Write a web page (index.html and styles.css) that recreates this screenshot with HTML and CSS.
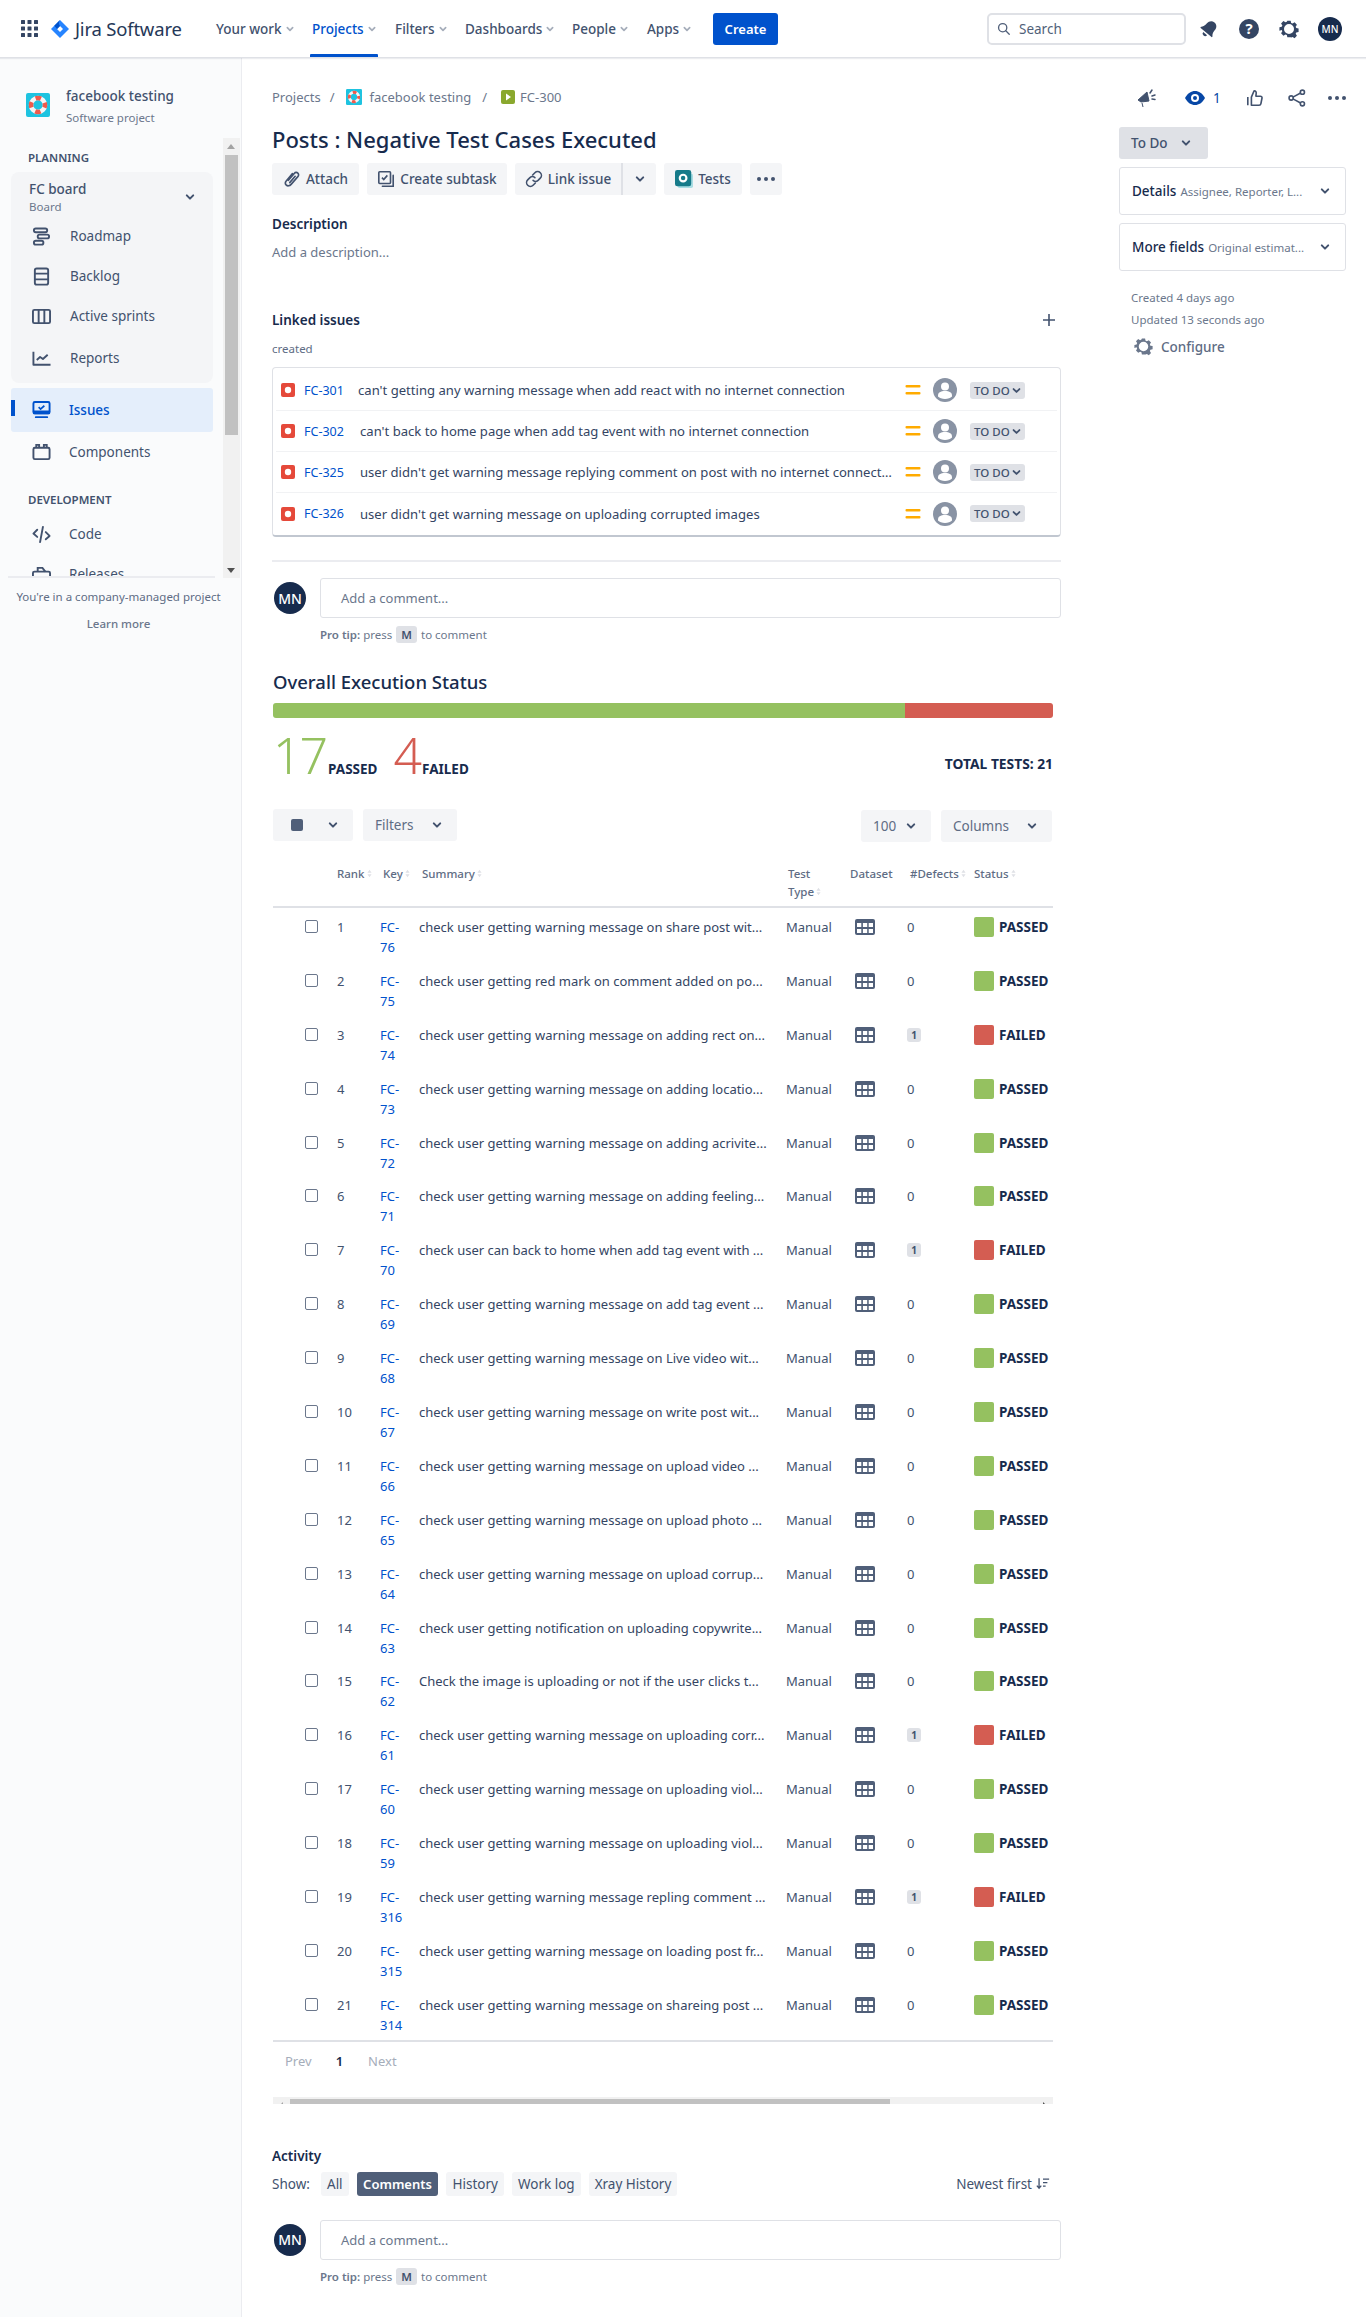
FILE: index.html
```html
<!DOCTYPE html>
<html lang="en">
<head>
  <meta charset="UTF-8" />
  <meta name="viewport" content="width=device-width, initial-scale=1.0" />
  <title>Posts : Negative Test Cases Executed</title>
  <link rel="stylesheet" href="styles.css">
</head>
<body>
  <svg class="sprites" aria-hidden="true">
    <symbol id="i-chev" viewBox="0 0 12 12"><path d="M2.8 4.4 6 7.6l3.2-3.2" fill="none" stroke="currentColor" stroke-width="2" stroke-linecap="round" stroke-linejoin="round"/></symbol>
    <symbol id="i-bug" viewBox="0 0 14 14"><rect width="14" height="14" rx="2" fill="#e5493a"/><circle cx="7" cy="7" r="3.2" fill="#fff"/></symbol>
    <symbol id="i-prio" viewBox="0 0 16 16"><rect x="0.5" y="3" width="15" height="2.600" rx="1" fill="#ffab00"/><rect x="0.5" y="10" width="15" height="2.600" rx="1" fill="#ffab00"/></symbol>
    <symbol id="i-user" viewBox="0 0 24 24"><circle cx="12" cy="12" r="12" fill="#8993a4"/><circle cx="12" cy="8.500" r="4" fill="#fff"/><path d="M5 17.500c0-3 2.500-4.500 7-4.500s7 1.500 7 4.500v1c-1.500 1.500-4 2.500-7 2.500s-5.500-1-7-2.500z" fill="#fff"/></symbol>
    <symbol id="i-table" viewBox="0 0 20 16"><rect width="20" height="16" rx="2" fill="#505f79"/><g fill="#fff"><rect x="2" y="4" width="4.300" height="4"/><rect x="7.900" y="4" width="4.300" height="4"/><rect x="13.700" y="4" width="4.300" height="4"/><rect x="2" y="10" width="4.300" height="4"/><rect x="7.900" y="10" width="4.300" height="4"/><rect x="13.700" y="10" width="4.300" height="4"/></g></symbol>
    <symbol id="i-sort" viewBox="0 0 6 10"><path d="M3 .5 5.500 4h-5zM3 9.500.5 6h5z" fill="#dfe1e6"/></symbol>
    <symbol id="i-gear" viewBox="0 0 24 24"><path fill-rule="evenodd" d="M10 2h4l.6 2.800 1.700.7 2.400-1.500 2.800 2.800-1.500 2.400.7 1.700 2.800.6v4l-2.800.6-.7 1.700 1.500 2.400-2.800 2.800-2.400-1.500-1.700.7L14 22h-4l-.6-2.800-1.700-.7-2.400 1.500-2.800-2.800 1.500-2.400-.7-1.700L.5 14v-4l2.800-.6.7-1.700L2.500 5.300l2.800-2.800 2.400 1.500 1.700-.7zM12 6a6 6 0 1 0 0 12 6 6 0 0 0 0-12z" fill="currentColor"/></symbol>
    <symbol id="i-project" viewBox="0 0 24 24"><rect width="24" height="24" rx="2" fill="#1ec3e0"/><circle cx="12" cy="12" r="7" fill="none" stroke="#f4f5f7" stroke-width="4.500"/><g fill="none" stroke="#ef5a4c" stroke-width="4.500" stroke-dasharray="5.500 5.500"><circle cx="12" cy="12" r="7" stroke-dashoffset="2.700"/></g></symbol>
  </svg>

  <header class="topbar">
    <svg class="apps-icon" viewBox="0 0 17 17"><g fill="#344563"><rect width="4" height="4" rx=".5"/><rect x="6.500" width="4" height="4" rx=".5"/><rect x="13" width="4" height="4" rx=".5"/><rect y="6.500" width="4" height="4" rx=".5"/><rect x="6.500" y="6.500" width="4" height="4" rx=".5"/><rect x="13" y="6.500" width="4" height="4" rx=".5"/><rect y="13" width="4" height="4" rx=".5"/><rect x="6.500" y="13" width="4" height="4" rx=".5"/><rect x="13" y="13" width="4" height="4" rx=".5"/></g></svg>
    <svg class="jira-mark" viewBox="0 0 18 18"><path d="M9 0 18 9l-9 9-9-9z" fill="#2684ff"/><path d="M9 6 12 9 9 12 6 9z" fill="#fff"/><path d="M9 0 3.300 5.700 6 9l3-3c-1.500-2-1.500-4 0-6z" fill="#0052cc"/></svg>
    <span class="jira-name">Jira Software</span>
    <nav class="topnav">
      <a class="nav-item w1">Your work <svg class="chev"><use href="#i-chev"/></svg></a>
      <a class="nav-item w2 active">Projects <svg class="chev"><use href="#i-chev"/></svg></a>
      <a class="nav-item w3">Filters <svg class="chev"><use href="#i-chev"/></svg></a>
      <a class="nav-item w4">Dashboards <svg class="chev"><use href="#i-chev"/></svg></a>
      <a class="nav-item w5">People <svg class="chev"><use href="#i-chev"/></svg></a>
      <a class="nav-item w6">Apps <svg class="chev"><use href="#i-chev"/></svg></a>
    </nav>
    <button class="create-btn">Create</button>
    <div class="search">
      <svg viewBox="0 0 16 16"><circle cx="6.500" cy="6.500" r="4.700" fill="none" stroke="#505f79" stroke-width="1.500"/><path d="m10 10 4 4" stroke="#505f79" stroke-width="1.500" stroke-linecap="round"/></svg>
      <span>Search</span>
    </div>
    <div class="top-icons">
      <svg viewBox="0 0 20 20"><g transform="rotate(40 10 10)" fill="#344563"><path d="M10 1.500c3.300 0 5.200 2.500 5.200 5.500 0 4 1 5 2.300 6.500v1h-15v-1C3.800 12 4.800 11 4.800 7c0-3 1.900-5.500 5.200-5.500z"/><path d="M7.500 16h5a2.500 2.500 0 0 1-5 0z"/></g></svg>
      <svg viewBox="0 0 20 20"><circle cx="10" cy="10" r="10" fill="#344563"/><text x="10" y="15" text-anchor="middle" class="help-q">?</text></svg>
      <svg class="gear-top"><use href="#i-gear"/></svg>
      <span class="avatar small">MN</span>
    </div>
  </header>

  <div class="layout">
    <aside class="sidebar">
      <div class="project">
        <svg class="project-icon"><use href="#i-project"/></svg>
        <div>
          <div class="project-name">facebook testing</div>
          <div class="project-type">Software project</div>
        </div>
      </div>
      <div class="side-scroll">
        <div class="side-inner">
          <div class="side-title first">PLANNING</div>
          <div class="board">
            <div class="board-head">
              <div>
                <div class="board-name">FC board</div>
                <div class="board-sub">Board</div>
              </div>
              <svg class="chev-dark"><use href="#i-chev"/></svg>
            </div>
            <a class="side-link in-board">
              <svg viewBox="0 0 20 20" fill="none" stroke="#42526e" stroke-width="2"><rect x="2" y="1.500" width="14" height="4" rx="2"/><rect x="6" y="8" width="12" height="4" rx="2"/><rect x="2" y="14.500" width="10" height="4" rx="2"/></svg>
              Roadmap
            </a>
            <a class="side-link in-board">
              <svg viewBox="0 0 20 20" fill="none" stroke="#42526e" stroke-width="2"><rect x="3" y="1.500" width="14" height="17" rx="2"/><path d="M3 7h14M3 13h14"/></svg>
              Backlog
            </a>
            <a class="side-link in-board">
              <svg viewBox="0 0 20 20" fill="none" stroke="#42526e" stroke-width="2"><rect x="1" y="3" width="18" height="14" rx="1.500"/><path d="M7 3v14M13 3v14"/></svg>
              Active sprints
            </a>
            <a class="side-link in-board">
              <svg viewBox="0 0 20 20" fill="none" stroke="#42526e" stroke-width="2" stroke-linejoin="round"><path d="M1.500 3v13.500h18"/><path d="m5 11.500 3.500-3 3 2 5-4.500"/></svg>
              Reports
            </a>
          </div>
          <a class="side-link selected">
            <svg viewBox="0 0 20 20"><rect x="1.500" y="1" width="17" height="12" rx="1.500" fill="none" stroke="#0052cc" stroke-width="2"/><rect x="1" y="10" width="18" height="4" rx="1" fill="#0052cc"/><path d="m7 6.500 2 2 4-3.500" fill="none" stroke="#0052cc" stroke-width="1.800"/><rect x="3" y="16" width="14" height="2" rx="1" fill="#0052cc"/></svg>
            Issues
          </a>
          <a class="side-link">
            <svg viewBox="0 0 20 20" fill="none" stroke="#42526e" stroke-width="2"><rect x="1.500" y="5" width="17" height="12" rx="1.500"/><path d="M4.500 5V2h3v3M12.500 5V2h3v3"/></svg>
            Components
          </a>
          <div class="side-title">DEVELOPMENT</div>
          <a class="side-link">
            <svg viewBox="0 0 20 20" fill="none" stroke="#42526e" stroke-width="2" stroke-linecap="round" stroke-linejoin="round"><path d="M5.500 5 1.500 9l4 3.500M14.500 7.500l4 4-4 3.500M11.500 2 8.500 18"/></svg>
            Code
          </a>
          <a class="side-link">
            <svg viewBox="0 0 20 20" fill="none" stroke="#42526e" stroke-width="2"><rect x="1" y="7" width="18" height="11" rx="1.500"/><path d="M6 7V3h5l3 4"/></svg>
            Releases
          </a>
        </div>
        <div class="side-scrollbar">
          <span class="arrow-up"></span>
          <span class="side-thumb"></span>
          <span class="arrow-down"></span>
        </div>
      </div>
      <div class="side-foot">
        <div>You're in a company-managed project</div>
        <div class="learn">Learn more</div>
      </div>
    </aside>

    <main class="issue">
      <div class="crumbs">
        <span>Projects</span><span class="slash">/</span>
        <svg class="crumb-project"><use href="#i-project"/></svg><span>facebook testing</span><span class="slash s2">/</span>
        <svg class="crumb-story" viewBox="0 0 14 14"><rect width="14" height="14" rx="2" fill="#8aa82e"/><path d="m5 3.500 5 3.500-5 3.500z" fill="#fff"/></svg><span>FC-300</span>
      </div>
      <h1>Posts : Negative Test Cases Executed</h1>
      <div class="toolbar">
        <button class="tool b-attach">
          <svg viewBox="0 0 20 20" fill="none" stroke="#42526e" stroke-width="1.800" stroke-linecap="round"><path d="M6 11.500 12.500 3.800c1.300-1.500 3-1.300 4-.4s1.200 2.700 0 4L9 16c-1.700 1.900-4 2-5.300.8-1.300-1.200-1.300-3.400.3-5.200L10.500 4"/><path d="M7.500 14 13.500 7"/></svg>
          Attach
        </button>
        <button class="tool b-sub">
          <svg viewBox="0 0 20 20" fill="none" stroke="#42526e" stroke-width="1.800"><rect x="2" y="2" width="13" height="13" rx="1"/><path d="M18 6v12H6" stroke-linecap="round"/><path d="m5.500 8.500 2 2 4-4.500"/></svg>
          Create subtask
        </button>
        <div class="tool-split">
          <button class="tool b-link">
            <svg viewBox="0 0 20 20" fill="none" stroke="#42526e" stroke-width="1.800" stroke-linecap="round"><path d="M8.500 5.500 11 3a4 4 0 0 1 6 6l-2.500 2.500a4 4 0 0 1-5.500 0"/><path d="M11.500 14.500 9 17a4 4 0 0 1-6-6l2.500-2.500a4 4 0 0 1 5.500 0"/></svg>
            Link issue
          </button>
          <button class="tool b-caret"><svg class="chev-dark"><use href="#i-chev"/></svg></button>
        </div>
        <button class="tool b-tests">
          <svg viewBox="0 0 20 20"><rect x="3" y="4" width="17" height="16" rx="2" fill="#a9dde3"/><rect x="0" y="0" width="18" height="18" rx="2.500" fill="#167b8a"/><circle cx="9" cy="9" r="3.700" fill="none" stroke="#fff" stroke-width="2.400"/></svg>
          Tests
        </button>
        <button class="tool b-more"><span class="dots"><i></i><i></i><i></i></span></button>
      </div>

      <h3 class="field-title desc-title">Description</h3>
      <div class="desc-empty">Add a description...</div>

      <div class="linked-head">
        <h3 class="field-title">Linked issues</h3>
        <svg class="plus" viewBox="0 0 14 14"><path d="M7 1v12M1 7h12" stroke="#42526e" stroke-width="1.600"/></svg>
      </div>
      <div class="linked-kind">created</div>
      <div class="linked-box">
        <div class="linked-row">
          <svg class="bug"><use href="#i-bug"/></svg><a class="key">FC-301</a>
          <span class="linked-text">can't getting any warning message when add react with no internet connection</span>
          <svg class="prio"><use href="#i-prio"/></svg><svg class="user"><use href="#i-user"/></svg>
          <span class="todo">TO DO<svg><use href="#i-chev"/></svg></span>
        </div>
        <div class="linked-row">
          <svg class="bug"><use href="#i-bug"/></svg><a class="key">FC-302</a>
          <span class="linked-text">can't back to home page when add tag event with no internet connection</span>
          <svg class="prio"><use href="#i-prio"/></svg><svg class="user"><use href="#i-user"/></svg>
          <span class="todo">TO DO<svg><use href="#i-chev"/></svg></span>
        </div>
        <div class="linked-row">
          <svg class="bug"><use href="#i-bug"/></svg><a class="key">FC-325</a>
          <span class="linked-text">user didn't get warning message replying comment on post with no internet connection</span>
          <svg class="prio"><use href="#i-prio"/></svg><svg class="user"><use href="#i-user"/></svg>
          <span class="todo">TO DO<svg><use href="#i-chev"/></svg></span>
        </div>
        <div class="linked-row">
          <svg class="bug"><use href="#i-bug"/></svg><a class="key">FC-326</a>
          <span class="linked-text">user didn't get warning message on uploading corrupted images</span>
          <svg class="prio"><use href="#i-prio"/></svg><svg class="user"><use href="#i-user"/></svg>
          <span class="todo">TO DO<svg><use href="#i-chev"/></svg></span>
        </div>
      </div>
      <div class="divider"></div>
      <div class="comment">
        <span class="avatar">MN</span>
        <div class="comment-input">Add a comment...</div>
      </div>
      <div class="protip"><b>Pro tip:</b> press <kbd>M</kbd> to comment</div>

      <h2 class="exec-title">Overall Execution Status</h2>
      <div class="exec-bar"><span class="bar-pass"></span><span class="bar-fail"></span></div>
      <div class="exec-stats">
        <span class="big pass">17</span><span class="big-label">PASSED</span>
        <span class="big fail">4</span><span class="big-label">FAILED</span>
        <span class="total">TOTAL TESTS: 21</span>
      </div>
      <div class="controls">
        <button class="ctl c-check"><span class="square"></span><svg class="chev-dark"><use href="#i-chev"/></svg></button>
        <button class="ctl c-filters">Filters<svg class="chev-dark"><use href="#i-chev"/></svg></button>
        <button class="ctl c-size">100<svg class="chev-dark"><use href="#i-chev"/></svg></button>
        <button class="ctl c-cols">Columns<svg class="chev-dark"><use href="#i-chev"/></svg></button>
      </div>

      <div class="tests">
        <div class="th-row">
          <span></span>
          <span>Rank<svg class="sort"><use href="#i-sort"/></svg></span>
          <span>Key<svg class="sort"><use href="#i-sort"/></svg></span>
          <span>Summary<svg class="sort"><use href="#i-sort"/></svg></span>
          <span>Test Type<svg class="sort"><use href="#i-sort"/></svg></span>
          <span>Dataset</span>
          <span>#Defects<svg class="sort"><use href="#i-sort"/></svg></span>
          <span>Status<svg class="sort"><use href="#i-sort"/></svg></span>
        </div>
        <div class="tr"><span class="check"></span><span>1</span><a class="tkey">FC-76</a><span class="sum">check user getting warning message on share post wit...</span><span>Manual</span><svg class="ds"><use href="#i-table"/></svg><span>0</span><span class="st passed">PASSED</span></div>
        <div class="tr"><span class="check"></span><span>2</span><a class="tkey">FC-75</a><span class="sum">check user getting red mark on comment added on po...</span><span>Manual</span><svg class="ds"><use href="#i-table"/></svg><span>0</span><span class="st passed">PASSED</span></div>
        <div class="tr"><span class="check"></span><span>3</span><a class="tkey">FC-74</a><span class="sum">check user getting warning message on adding rect on...</span><span>Manual</span><svg class="ds"><use href="#i-table"/></svg><span class="defect">1</span><span class="st failed">FAILED</span></div>
        <div class="tr"><span class="check"></span><span>4</span><a class="tkey">FC-73</a><span class="sum">check user getting warning message on adding locatio...</span><span>Manual</span><svg class="ds"><use href="#i-table"/></svg><span>0</span><span class="st passed">PASSED</span></div>
        <div class="tr"><span class="check"></span><span>5</span><a class="tkey">FC-72</a><span class="sum">check user getting warning message on adding acrivite...</span><span>Manual</span><svg class="ds"><use href="#i-table"/></svg><span>0</span><span class="st passed">PASSED</span></div>
        <div class="tr"><span class="check"></span><span>6</span><a class="tkey">FC-71</a><span class="sum">check user getting warning message on adding feeling...</span><span>Manual</span><svg class="ds"><use href="#i-table"/></svg><span>0</span><span class="st passed">PASSED</span></div>
        <div class="tr"><span class="check"></span><span>7</span><a class="tkey">FC-70</a><span class="sum">check user can back to home when add tag event with ...</span><span>Manual</span><svg class="ds"><use href="#i-table"/></svg><span class="defect">1</span><span class="st failed">FAILED</span></div>
        <div class="tr"><span class="check"></span><span>8</span><a class="tkey">FC-69</a><span class="sum">check user getting warning message on add tag event ...</span><span>Manual</span><svg class="ds"><use href="#i-table"/></svg><span>0</span><span class="st passed">PASSED</span></div>
        <div class="tr"><span class="check"></span><span>9</span><a class="tkey">FC-68</a><span class="sum">check user getting warning message on Live video wit...</span><span>Manual</span><svg class="ds"><use href="#i-table"/></svg><span>0</span><span class="st passed">PASSED</span></div>
        <div class="tr"><span class="check"></span><span>10</span><a class="tkey">FC-67</a><span class="sum">check user getting warning message on write post wit...</span><span>Manual</span><svg class="ds"><use href="#i-table"/></svg><span>0</span><span class="st passed">PASSED</span></div>
        <div class="tr"><span class="check"></span><span>11</span><a class="tkey">FC-66</a><span class="sum">check user getting warning message on upload video ...</span><span>Manual</span><svg class="ds"><use href="#i-table"/></svg><span>0</span><span class="st passed">PASSED</span></div>
        <div class="tr"><span class="check"></span><span>12</span><a class="tkey">FC-65</a><span class="sum">check user getting warning message on upload photo ...</span><span>Manual</span><svg class="ds"><use href="#i-table"/></svg><span>0</span><span class="st passed">PASSED</span></div>
        <div class="tr"><span class="check"></span><span>13</span><a class="tkey">FC-64</a><span class="sum">check user getting warning message on upload corrup...</span><span>Manual</span><svg class="ds"><use href="#i-table"/></svg><span>0</span><span class="st passed">PASSED</span></div>
        <div class="tr"><span class="check"></span><span>14</span><a class="tkey">FC-63</a><span class="sum">check user getting notification on uploading copywrite...</span><span>Manual</span><svg class="ds"><use href="#i-table"/></svg><span>0</span><span class="st passed">PASSED</span></div>
        <div class="tr"><span class="check"></span><span>15</span><a class="tkey">FC-62</a><span class="sum">Check the image is uploading or not if the user clicks t...</span><span>Manual</span><svg class="ds"><use href="#i-table"/></svg><span>0</span><span class="st passed">PASSED</span></div>
        <div class="tr"><span class="check"></span><span>16</span><a class="tkey">FC-61</a><span class="sum">check user getting warning message on uploading corr...</span><span>Manual</span><svg class="ds"><use href="#i-table"/></svg><span class="defect">1</span><span class="st failed">FAILED</span></div>
        <div class="tr"><span class="check"></span><span>17</span><a class="tkey">FC-60</a><span class="sum">check user getting warning message on uploading viol...</span><span>Manual</span><svg class="ds"><use href="#i-table"/></svg><span>0</span><span class="st passed">PASSED</span></div>
        <div class="tr"><span class="check"></span><span>18</span><a class="tkey">FC-59</a><span class="sum">check user getting warning message on uploading viol...</span><span>Manual</span><svg class="ds"><use href="#i-table"/></svg><span>0</span><span class="st passed">PASSED</span></div>
        <div class="tr"><span class="check"></span><span>19</span><a class="tkey">FC-316</a><span class="sum">check user getting warning message repling comment ...</span><span>Manual</span><svg class="ds"><use href="#i-table"/></svg><span class="defect">1</span><span class="st failed">FAILED</span></div>
        <div class="tr"><span class="check"></span><span>20</span><a class="tkey">FC-315</a><span class="sum">check user getting warning message on loading post fr...</span><span>Manual</span><svg class="ds"><use href="#i-table"/></svg><span>0</span><span class="st passed">PASSED</span></div>
        <div class="tr"><span class="check"></span><span>21</span><a class="tkey">FC-314</a><span class="sum">check user getting warning message on shareing post ...</span><span>Manual</span><svg class="ds"><use href="#i-table"/></svg><span>0</span><span class="st passed">PASSED</span></div>
      </div>
      <div class="pager"><span class="off">Prev</span><b>1</b><span class="off">Next</span></div>
      <div class="hscroll"><span class="hleft"></span><span class="hthumb"></span><span class="hright"></span></div>

      <h3 class="field-title activity-title">Activity</h3>
      <div class="activity-row">
        <span class="show">Show:</span>
        <button class="pill">All</button>
        <button class="pill on">Comments</button>
        <button class="pill">History</button>
        <button class="pill">Work log</button>
        <button class="pill">Xray History</button>
        <span class="newest">Newest first
          <svg viewBox="0 0 16 14" fill="none" stroke="#42526e" stroke-width="1.500"><path d="M3.500 1v11M1 9.500l2.500 3 2.500-3M8 2h7M8 6h5M8 10h3"/></svg>
        </span>
      </div>
      <div class="comment second">
        <span class="avatar">MN</span>
        <div class="comment-input">Add a comment...</div>
      </div>
      <div class="protip"><b>Pro tip:</b> press <kbd>M</kbd> to comment</div>
    </main>

    <section class="side-panel">
      <div class="actions">
        <svg class="a-mega" viewBox="0 0 20 20"><path d="M1 12 10 4l2 9-8 1zM5 15l1 4" fill="#42526e" stroke="#42526e" stroke-width="1"/><path d="M13 5l2-3M15 8l3-1M15 11l3 .5" stroke="#42526e" stroke-width="1.500" stroke-linecap="round"/></svg>
        <span class="a-watch">
          <svg viewBox="0 0 20 14"><path d="M0 7C3 2 6 0 10 0s7 2 10 7c-3 5-6 7-10 7S3 12 0 7z" fill="#0747a6"/><circle cx="10" cy="7" r="4" fill="#fff"/><circle cx="10" cy="7" r="2" fill="#0747a6"/></svg>
          1
        </span>
        <svg class="a-like" viewBox="0 0 20 20" fill="none" stroke="#42526e" stroke-width="1.800" stroke-linejoin="round"><path d="M2 9v9M6 18V9l3-7c2 0 2.500 1.500 2.300 3L11 8h5c1.200 0 2 1 1.800 2l-1.300 6.500c-.2 1-1 1.500-2 1.500z"/></svg>
        <svg class="a-share" viewBox="0 0 20 20" fill="none" stroke="#42526e" stroke-width="1.800"><circle cx="3.500" cy="10" r="2.300"/><circle cx="16" cy="3.500" r="2.300"/><circle cx="16" cy="16.500" r="2.300"/><path d="m5.500 9 8.500-4.500M5.500 11l8.500 4.500"/></svg>
        <span class="dots a-dots"><i></i><i></i><i></i></span>
      </div>
      <button class="status-btn">To Do <svg class="chev-dark"><use href="#i-chev"/></svg></button>
      <div class="panel"><b>Details</b> <span class="muted">Assignee, Reporter, L...</span><svg class="chev-dark"><use href="#i-chev"/></svg></div>
      <div class="panel"><b>More fields</b> <span class="muted">Original estimat...</span><svg class="chev-dark"><use href="#i-chev"/></svg></div>
      <div class="dates">Created 4 days ago</div>
      <div class="dates">Updated 13 seconds ago</div>
      <div class="configure"><svg><use href="#i-gear"/></svg>Configure</div>
    </section>
  </div>
</body>
</html>
```

FILE: styles.css
```css
* {
  box-sizing: border-box;
}
body {
  margin: 0;
  font-family: "Noto Sans", "Open Sans", Arial, sans-serif;
  font-size: 13px;
  color: #172b4d;
  background: #fff;
  height: 2317px;
  overflow: hidden;
}
button {
  font-family: inherit;
  border: none;
}
.sprites {
  display: none;
}
h1, h2, h3 {
  margin: 0;
}

/* top bar */
.topbar {
  height: 58px;
  display: flex;
  align-items: center;
  border-bottom: 1px solid #dfe1e6;
  box-shadow: 0 1px 1px rgba(9,30,66,0.08);
  padding-left: 21px;
  position: relative;
}
.apps-icon {
  width: 17px;
  height: 17px;
}
.jira-mark {
  width: 18px;
  height: 18px;
  margin-left: 13px;
}
.jira-name {
  font-size: 18.5px;
  color: #253858;
  margin-left: 6px;
  width: 141px;
  letter-spacing: -0.2px;
}
.topnav {
  display: flex;
  height: 57px;
}
.nav-item {
  display: flex;
  align-items: center;
  height: 57px;
  color: #42526e;
  font-size: 13.5px;
  font-weight: 500;
  white-space: nowrap;
}
.nav-item.w1 { width: 96px; }
.nav-item.w2 { width: 83px; }
.nav-item.w3 { width: 70px; }
.nav-item.w4 { width: 107px; }
.nav-item.w5 { width: 75px; }
.nav-item.w6 { width: 66px; }
.nav-item.active {
  color: #0052cc;
  position: relative;
}
.nav-item.active::after {
  content: "";
  position: absolute;
  left: -2px;
  right: 17px;
  bottom: 0;
  height: 3px;
  background: #0052cc;
  border-radius: 1px 1px 0 0;
}
.chev {
  width: 10px;
  height: 10px;
  margin-left: 3px;
  color: #a5adba;
}
.create-btn {
  width: 65px;
  height: 32px;
  background: #0052cc;
  color: #fff;
  border-radius: 3px;
  font-size: 13px;
  font-weight: 600;
}
.search {
  width: 199px;
  height: 32px;
  margin-left: 209px;
  border: 2px solid #dfe1e6;
  border-radius: 5px;
  display: flex;
  align-items: center;
  padding-left: 8px;
  color: #505f79;
  font-size: 13.5px;
}
.search svg {
  width: 14px;
  height: 14px;
  margin-right: 8px;
}
.top-icons {
  display: flex;
  align-items: center;
  margin-left: 13px;
}
.top-icons svg {
  width: 20px;
  height: 20px;
  margin-right: 20px;
}
.top-icons .gear-top {
  color: #344563;
  margin-right: 19px;
}
.help-q {
  font-size: 15px;
  font-weight: 700;
  fill: #fff;
}
.avatar {
  width: 32px;
  height: 32px;
  flex: none;
  border-radius: 50%;
  background: #172b4d;
  color: #fff;
  font-size: 14px;
  font-weight: 500;
  display: flex;
  align-items: center;
  justify-content: center;
}
.avatar.small {
  width: 24px;
  height: 24px;
  font-size: 10px;
}

.layout {
  display: flex;
  height: 2259px;
}

/* left sidebar */
.sidebar {
  width: 242px;
  flex: none;
  background: #fafbfc;
  border-right: 1px solid #ebecf0;
  padding-top: 35px;
  font-size: 13.5px;
}
.project {
  display: flex;
  padding-left: 26px;
  height: 40px;
  gap: 16px;
}
.project-icon {
  width: 24px;
  height: 24px;
}
.project-name {
  font-size: 13.5px;
  font-weight: 500;
  color: #42526e;
  line-height: 18px;
  margin-top: -6px;
}
.project-type {
  font-size: 11.5px;
  color: #6b778c;
  line-height: 16px;
  margin-top: 5px;
}
.side-scroll {
  height: 440px;
  margin-top: 5px;
  display: flex;
}
.side-inner {
  width: 223px;
  flex: none;
  overflow: hidden;
  padding: 12px 0 0 11px;
  position: relative;
}
.side-inner::after {
  content: "";
  position: absolute;
  left: 8px;
  right: 8px;
  bottom: 0;
  height: 2px;
  background: #ebecf0;
}
.side-title {
  font-size: 11.5px;
  font-weight: 600;
  color: #42526e;
  line-height: 16px;
  padding-left: 17px;
  margin-top: 20px;
  margin-bottom: 6px;
}
.side-title.first {
  margin-top: 0;
}
.board {
  width: 202px;
  height: 211px;
  background: #f4f5f7;
  border-radius: 8px;
}
.board-head {
  display: flex;
  justify-content: space-between;
  align-items: center;
  padding: 6px 17px 0 18px;
  height: 44px;
}
.board-name {
  font-size: 13.5px;
  color: #42526e;
  line-height: 20px;
  font-weight: 500;
}
.board-sub {
  font-size: 11.5px;
  color: #6b778c;
  line-height: 16px;
}
.side-link {
  display: flex;
  align-items: center;
  height: 40px;
  color: #42526e;
  font-size: 13.5px;
  padding-left: 21px;
  gap: 18px;
  position: relative;
}
.side-link svg {
  width: 19px;
  height: 19px;
  flex: none;
}
.side-link.in-board {
  gap: 19px;
}
.side-link.in-board:last-child {
  height: 44px;
}
.side-link.selected {
  width: 202px;
  height: 44px;
  margin-top: 5px;
  background: #e4eefb;
  color: #0052cc;
  border-radius: 3px;
  font-weight: 500;
}
.side-link.selected::before {
  content: "";
  position: absolute;
  left: 0;
  top: 12px;
  width: 4px;
  height: 16px;
  background: #0052cc;
}
.side-scrollbar {
  width: 17px;
  background: #f1f1f1;
  position: relative;
}
.side-thumb {
  position: absolute;
  left: 2px;
  top: 17px;
  width: 13px;
  height: 280px;
  background: #c1c1c1;
}
.arrow-up, .arrow-down {
  position: absolute;
  left: 4px;
  width: 0;
  height: 0;
  border-left: 4px solid transparent;
  border-right: 4px solid transparent;
}
.arrow-up {
  top: 6px;
  border-bottom: 5px solid #a3a3a3;
}
.arrow-down {
  bottom: 5px;
  border-top: 5px solid #505050;
}
.side-foot {
  text-align: center;
  font-size: 11.5px;
  color: #5e6c84;
  padding: 11px 4px 0 0;
  line-height: 16px;
}
.learn {
  margin-top: 11px;
  font-weight: 500;
  color: #6b778c;
}
.chev-dark {
  width: 12px;
  height: 12px;
  color: #42526e;
  flex: none;
}

/* issue column */
.issue {
  width: 789px;
  flex: none;
  margin-left: 30px;
  padding-top: 29px;
}
.crumbs {
  display: flex;
  align-items: center;
  height: 20px;
  color: #6b778c;
  font-size: 13px;
}
.slash {
  margin: 0 11px 0 9px;
}
.slash.s2 {
  margin: 0 14px 0 11px;
}
.crumb-project {
  width: 16px;
  height: 16px;
  margin-right: 8px;
}
.crumb-story {
  width: 14px;
  height: 14px;
  margin-right: 5px;
}
h1 {
  font-size: 22px;
  font-weight: 500;
  line-height: 32px;
  margin-top: 16px;
  color: #172b4d;
}
.toolbar {
  display: flex;
  gap: 8px;
  margin-top: 8px;
  height: 32px;
}
.tool {
  height: 32px;
  background: #f4f5f7;
  border-radius: 3px;
  color: #42526e;
  font-size: 13.5px;
  font-weight: 500;
  display: flex;
  align-items: center;
  justify-content: center;
  gap: 5px;
  padding: 0;
  white-space: nowrap;
}
.tool svg {
  width: 18px;
  height: 18px;
}
.b-attach { width: 87px; }
.b-sub { width: 140px; }
.tool-split {
  display: flex;
}
.b-link {
  width: 108px;
  border-right: 2px solid #dfe1e6;
  border-radius: 3px 0 0 3px;
}
.b-caret {
  width: 33px;
  border-radius: 0 3px 3px 0;
}
.b-caret svg {
  width: 12px;
  height: 12px;
}
.b-tests { width: 78px; }
.b-more { width: 32px; }
.dots {
  display: inline-flex;
  gap: 3px;
}
.dots i {
  width: 4px;
  height: 4px;
  border-radius: 50%;
  background: #42526e;
}
.field-title {
  font-size: 13.5px;
  font-weight: 600;
  line-height: 20px;
  color: #172b4d;
}
.desc-title {
  margin-top: 19px;
}
.desc-empty {
  line-height: 20px;
  margin-top: 8px;
  color: #6b778c;
  font-size: 13px;
}
.linked-head {
  display: flex;
  justify-content: space-between;
  align-items: center;
  height: 20px;
  margin-top: 48px;
  padding-right: 5px;
}
.plus {
  width: 14px;
  height: 14px;
}
.linked-kind {
  font-size: 11.5px;
  color: #5e6c84;
  line-height: 16px;
  margin-top: 11px;
}
.linked-box {
  margin-top: 10px;
  height: 170px;
  border: 1px solid #dfe1e6;
  border-bottom: 2px solid #c1c7d0;
  border-radius: 4px;
  padding: 2px 3px 0;
}
.linked-row {
  display: flex;
  align-items: center;
  height: 41px;
  border-bottom: 1px solid #f1f2f4;
  padding: 0 32px 0 5px;
}
.linked-row:last-child {
  border-bottom: 0;
}
.bug {
  width: 14px;
  height: 14px;
  flex: none;
}
.key {
  color: #0052cc;
  font-size: 12.5px;
  margin-left: 9px;
  width: 56px;
  flex: none;
  white-space: nowrap;
}
.linked-row:first-child .key {
  width: 54px;
}
.linked-text {
  flex: 1;
  min-width: 0;
  padding-right: 11px;
  white-space: nowrap;
  overflow: hidden;
  text-overflow: ellipsis;
  color: #344563;
  font-size: 13.1px;
}
.prio {
  width: 16px;
  height: 16px;
  flex: none;
}
.user {
  width: 24px;
  height: 24px;
  margin-left: 12px;
  flex: none;
}
.todo {
  display: flex;
  align-items: center;
  height: 17px;
  width: 55px;
  flex: none;
  margin-left: 13px;
  background: #dfe1e6;
  border-radius: 3px;
  font-size: 11.5px;
  font-weight: 500;
  color: #42526e;
  padding-left: 4px;
  white-space: nowrap;
}
.todo svg {
  width: 11px;
  height: 11px;
  margin-left: 1px;
}
.divider {
  height: 2px;
  background: #ebecf0;
  margin-top: 23px;
}
.comment {
  display: flex;
  margin-top: 16px;
  height: 40px;
  align-items: flex-start;
}
.comment .avatar {
  margin: 4px 0 0 2px;
}
.comment-input {
  width: 741px;
  height: 40px;
  margin-left: 14px;
  border: 1px solid #dfe1e6;
  border-radius: 3px;
  padding-left: 20px;
  line-height: 38px;
  color: #6b778c;
  font-size: 13px;
}
.protip {
  margin: 9px 0 0 48px;
  font-size: 11.5px;
  line-height: 16px;
  color: #6b778c;
}
.protip b {
  font-weight: 600;
}
kbd {
  font-family: inherit;
  background: #dfe1e6;
  color: #42526e;
  font-weight: 600;
  border-radius: 3px;
  padding: 1px 5px;
  margin: 0 1px;
}
.exec-title {
  font-size: 18.5px;
  font-weight: 500;
  line-height: 24px;
  margin-top: 27px;
  margin-left: 1px;
}
.exec-bar {
  display: flex;
  width: 780px;
  height: 15px;
  margin: 9px 0 0 1px;
  border-radius: 3px;
  overflow: hidden;
}
.bar-pass {
  width: 632px;
  background: #95c160;
}
.bar-fail {
  flex: 1;
  background: #d45d52;
}
.exec-stats {
  display: flex;
  align-items: baseline;
  width: 780px;
  height: 63px;
  margin: 7px 0 0 1px;
}
.big {
  font-size: 50px;
  font-weight: 300;
  line-height: 60px;
  letter-spacing: -2px;
}
.big.pass {
  color: #95c160;
}
.big.fail {
  color: #d45d52;
  margin-left: 16px;
}
.big-label {
  font-size: 13.5px;
  font-weight: 700;
  margin-left: 2px;
}
.total {
  margin-left: auto;
  font-size: 13.8px;
  font-weight: 700;
  position: relative;
  top: -5px;
}
.controls {
  display: flex;
  width: 780px;
  margin: 21px 0 0 1px;
  height: 33px;
}
.ctl {
  height: 32px;
  background: #f4f5f7;
  border-radius: 3px;
  color: #5e6c84;
  font-size: 13.5px;
  display: flex;
  align-items: center;
  justify-content: space-between;
  padding: 0 14px 0 12px;
}
.c-check { width: 80px; padding-left: 18px; }
.c-filters { width: 94px; margin-left: 10px; }
.c-size { width: 70px; margin: 1px 0 0 404px; }
.c-cols { width: 111px; margin: 1px 0 0 10px; }
.square {
  width: 12px;
  height: 12px;
  border-radius: 2px;
  background: #505f79;
}

/* tests table */
.tests {
  width: 780px;
  margin: 0 0 0 1px;
  border-bottom: 2px solid #dfe1e6;
}
.th-row {
  display: grid;
  grid-template-columns: 64px 46px 39px 366px 62px 60px 64px 78px;
  height: 66px;
  padding-top: 23px;
  border-bottom: 2px solid #dfe1e6;
  font-size: 11.5px;
  font-weight: 500;
  color: #5e6c84;
  line-height: 18px;
}
.th-row span:nth-child(5) {
  width: 40px;
}
.sort {
  width: 5px;
  height: 9px;
  margin-left: 2px;
}
.tr {
  display: grid;
  grid-template-columns: 64px 43px 39px 367px 69px 52px 67px 78px;
  height: 53.9px;
  padding-top: 9px;
  line-height: 20px;
  color: #42526e;
  font-size: 13px;
}
.check {
  width: 13px;
  height: 13px;
  margin: 3px 0 0 32px;
  border: 1px solid #6b778c;
  border-radius: 2px;
  background: #fff;
}
.tkey {
  color: #0052cc;
  width: 28px;
  overflow-wrap: anywhere;
}
.sum {
  white-space: nowrap;
  overflow: hidden;
  color: #344563;
}
.ds {
  width: 20px;
  height: 16px;
  margin-top: 2px;
}
.defect {
  width: 14px;
  height: 14px;
  margin-top: 3px;
  background: #dfe1e6;
  border-radius: 3px;
  color: #42526e;
  font-size: 10px;
  font-weight: 700;
  line-height: 14px;
  text-align: center;
}
.st {
  display: flex;
  align-items: center;
  height: 20px;
  gap: 5px;
  font-size: 13.5px;
  font-weight: 700;
  color: #172b4d;
  white-space: nowrap;
}
.st::before {
  content: "";
  width: 20px;
  height: 20px;
  flex: none;
  border-radius: 2px;
}
.st.passed::before {
  background: #95c160;
}
.st.failed::before {
  background: #d45d52;
}
.pager {
  display: flex;
  margin: 9px 0 0 13px;
  height: 20px;
  line-height: 20px;
  font-size: 13px;
}
.pager .off {
  color: #a5adba;
}
.pager b {
  margin: 0 25px 0 24px;
  font-weight: 600;
}
.hscroll {
  display: flex;
  align-items: flex-end;
  width: 780px;
  height: 7px;
  margin: 26px 0 0 1px;
  background: #f1f1f1;
}
.hleft, .hright {
  width: 0;
  height: 0;
  border-top: 2px solid transparent;
}
.hleft {
  margin-left: 8px;
  border-right: 2px solid #a3a3a3;
}
.hright {
  margin-left: 153px;
  border-left: 2px solid #505050;
}
.hthumb {
  width: 600px;
  height: 5px;
  margin-left: 7px;
  background: #c1c1c1;
}
.activity-title {
  margin-top: 42px;
}
.activity-row {
  display: flex;
  align-items: center;
  height: 24px;
  margin-top: 6px;
  gap: 8px;
}
.show {
  color: #42526e;
  font-size: 13.5px;
  width: 41px;
}
.pill {
  height: 24px;
  padding: 0 6px;
  background: #f4f5f7;
  border-radius: 3px;
  color: #42526e;
  font-size: 13.5px;
  white-space: nowrap;
}
.pill.on {
  background: #505f79;
  color: #fff;
  font-weight: 600;
  padding: 0 6.500px;
  font-size: 13px;
}
.newest {
  margin-left: auto;
  margin-right: 11px;
  display: flex;
  align-items: center;
  gap: 4px;
  color: #42526e;
  font-size: 13.5px;
  white-space: nowrap;
}
.newest svg {
  width: 14px;
  height: 13px;
}
.comment.second {
  margin-top: 24px;
}

/* right column */
.side-panel {
  width: 227px;
  flex: none;
  margin-left: 58px;
  padding-top: 28px;
}
.actions {
  height: 24px;
  display: flex;
  align-items: center;
  color: #0747a6;
  font-size: 13.5px;
}
.actions svg {
  flex: none;
}
.a-mega {
  width: 20px;
  height: 20px;
  margin-left: 18px;
}
.a-watch {
  display: flex;
  align-items: center;
  gap: 8px;
  margin-left: 28px;
  width: 55px;
}
.a-watch svg {
  width: 20px;
  height: 14px;
}
.a-like {
  width: 18px;
  height: 18px;
  margin-left: 10px;
}
.a-share {
  width: 18px;
  height: 18px;
  margin-left: 24px;
}
.a-dots {
  margin-left: 22px;
}
.status-btn {
  display: flex;
  align-items: center;
  gap: 12px;
  width: 89px;
  height: 32px;
  margin-top: 17px;
  padding-left: 12px;
  background: #dfe1e6;
  border-radius: 3px;
  color: #42526e;
  font-size: 13.5px;
  font-weight: 500;
}
.panel {
  display: flex;
  align-items: center;
  width: 227px;
  height: 48px;
  margin-top: 8px;
  border: 1px solid #dfe1e6;
  border-radius: 3px;
  padding: 0 14px 0 12px;
  font-size: 13.5px;
  white-space: nowrap;
}
.panel b {
  font-weight: 500;
  color: #172b4d;
}
.panel .muted {
  color: #6b778c;
  font-size: 11.5px;
  margin-left: 4px;
  flex: 1;
}
.dates {
  font-size: 11.5px;
  color: #6b778c;
  line-height: 22px;
  padding-left: 12px;
}
.panel + .dates {
  margin-top: 16px;
}
.configure {
  display: flex;
  align-items: center;
  gap: 8px;
  margin: 6px 0 0 15px;
  color: #5e6c84;
  font-size: 13.5px;
  font-weight: 500;
}
.configure svg {
  width: 19px;
  height: 19px;
  color: #6b778c;
}
```
